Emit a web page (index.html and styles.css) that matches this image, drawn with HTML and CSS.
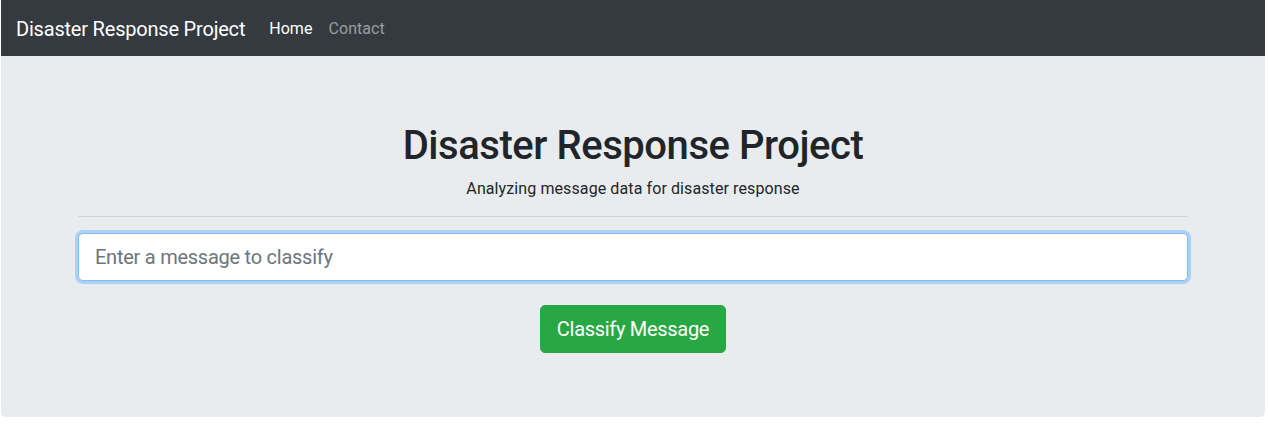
FILE: index.html
```html
<!DOCTYPE html>
<html lang="en">
<head>
<meta charset="utf-8">
<title>Disaster Response Project</title>
<link rel="stylesheet" href="styles.css">
</head>
<body>
<nav class="navbar">
  <a class="brand" href="#">Disaster Response Project</a>
  <ul class="nav">
    <li><a class="nav-link active" href="#">Home</a></li>
    <li><a class="nav-link" href="#">Contact</a></li>
  </ul>
</nav>
<div class="jumbotron">
  <div class="container">
    <h1 class="title">Disaster Response Project</h1>
    <p class="lead">Analyzing message data for disaster response</p>
    <hr class="rule">
    <form class="form">
      <input class="input" type="text" name="query" placeholder="Enter a message to classify" autofocus>
      <div class="actions">
        <button type="submit" class="btn">Classify Message</button>
      </div>
    </form>
  </div>
</div>
</body>
</html>
```
FILE: styles.css
```css
* { box-sizing: border-box; }
html, body { margin: 0; }
body {
  padding: 0 3px 0 1px;
  font-family: Roboto, Inter, "Noto Sans", "Liberation Sans", sans-serif;
  font-size: 16px;
  line-height: 1.5;
  color: #212529;
  background: #fff;
}
.navbar {
  display: flex;
  align-items: center;
  height: 56px;
  padding: 9px 15px 7px;
  background: #343a40;
}
.brand {
  font-size: 20px;
  line-height: 30px;
  color: #fff;
  text-decoration: none;
  margin-right: 16px;
  letter-spacing: -0.2px;
}
.nav {
  display: flex;
  list-style: none;
  margin: 0;
  padding: 0;
}
.nav-link {
  display: block;
  padding: 8px 8px;
  color: rgba(255,255,255,.5);
  text-decoration: none;
  font-size: 16px;
  letter-spacing: 0.05px;
}
.nav-link.active { color: #fff; }
.jumbotron {
  background: #e9ecef;
  padding: 64px 0;
  border-radius: 0 0 5px 5px;
}
.container {
  max-width: 1140px;
  margin: 0 auto;
  padding: 0 15px;
  display: flex;
  flex-direction: column;
  align-items: center;
}
.title {
  margin: 0 0 6px;
  padding-top: 2px;
  font-size: 40px;
  line-height: 48px;
  font-weight: 500;
  letter-spacing: -0.45px;
}
.lead {
  margin: 0 0 15px;
  padding-top: 1px;
  font-size: 16px;
  line-height: 24px;
  letter-spacing: 0.1px;
}
.rule {
  align-self: stretch;
  margin: 0 0 16px;
  border: 0;
  border-top: 1px solid rgba(0,0,0,.1);
}
.form {
  align-self: stretch;
  display: flex;
  flex-direction: column;
  align-items: center;
  gap: 24px;
}
.input {
  width: 100%;
  height: 48px;
  padding: 8px 16px;
  font-family: inherit;
  font-size: 20px;
  line-height: 30px;
  color: #495057;
  background: #fff;
  border: 1px solid #80bdff;
  border-radius: 5px;
  box-shadow: 0 0 0 3px rgba(0,123,255,.25);
  outline: none;
  letter-spacing: -0.25px;
}
.input::placeholder { color: #6c757d; opacity: 1; }
.actions { display: flex; justify-content: center; }
.btn {
  height: 48px;
  padding: 8px 16px;
  font-family: inherit;
  font-size: 20px;
  line-height: 30px;
  color: #fff;
  background: #28a745;
  border: 1px solid #28a745;
  border-radius: 5px;
  cursor: pointer;
  letter-spacing: -0.3px;
}
```
